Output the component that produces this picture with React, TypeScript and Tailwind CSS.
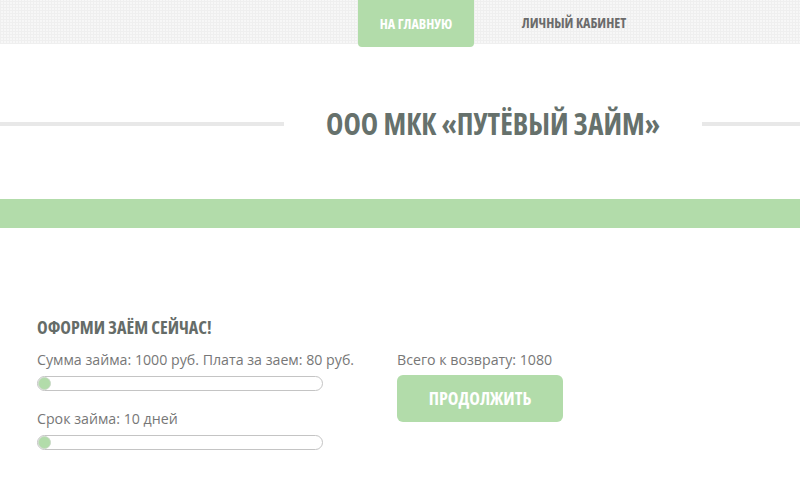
import React from "react";

const cond = "font-['Open_Sans',sans-serif] font-bold font-stretch-condensed";

function Slider() {
  return (
    <div className="relative w-[286px] h-[15px] rounded-full border border-[#c4c4c4] bg-white">
      <div className="absolute left-[0px] top-[0px] w-[13px] h-[13px] rounded-full bg-[#b2dcaa] border border-[#c9d9c6]" />
    </div>
  );
}

export default function App() {
  return (
    <div className="w-[800px] h-[493px] bg-white overflow-hidden font-['Open_Sans',sans-serif]">
      <div
        className="h-[44px] flex justify-start pl-[358px]"
        style={{
          backgroundColor: "#f7f7f7",
          backgroundImage:
            "repeating-linear-gradient(0deg, #efefef 0 1px, transparent 1px 3px), repeating-linear-gradient(90deg, #efefef 0 1px, transparent 1px 3px)",
        }}
      >
        <div className={`w-[116px] h-[47px] bg-[#b2dcaa] rounded-b-[4px] flex items-center justify-center text-white text-[14px] ${cond}`}>
          НА ГЛАВНУЮ
        </div>
        <div className={`w-[200px] h-[44px] flex items-center justify-center text-[#6b6b6b] text-[14px] ${cond}`}>
          ЛИЧНЫЙ КАБИНЕТ
        </div>
      </div>
      <div className="h-[155px] flex items-start pt-[59px]">
        <div className="flex items-center w-full">
          <div className="w-[284px] h-[4px] bg-[#e8e8e8]" />
          <div className={`flex-1 text-center text-[29.4px] leading-[42px] text-[#66716c] ${cond}`}>
            ООО МКК «ПУТЁВЫЙ ЗАЙМ»
          </div>
          <div className="w-[98px] h-[4px] bg-[#e8e8e8]" />
        </div>
      </div>
      <div className="h-[29px] bg-[#b2dcaa]" />
      <div className="pl-[37px] pt-[86px] flex">
        <div className="flex flex-col w-[360px]">
          <div className={`text-[18px] leading-[26px] text-[#656c68] ${cond}`}>ОФОРМИ ЗАЁМ СЕЙЧАС!</div>
          <div className="mt-[10px] text-[14.2px] leading-[20px] text-[#777]">Сумма займа: 1000 руб. Плата за заем: 80 руб.</div>
          <div className="mt-[6px]"><Slider /></div>
          <div className="mt-[18px] text-[14.2px] leading-[20px] text-[#777]">Срок займа: 10 дней</div>
          <div className="mt-[6px]"><Slider /></div>
        </div>
        <div className="flex flex-col pt-[36px]">
          <div className="text-[14.2px] leading-[20px] text-[#777]">Всего к возврату: 1080</div>
          <div className={`mt-[5px] w-[166px] h-[47px] rounded-[6px] bg-[#b2dcaa] flex items-center justify-center text-white text-[18px] ${cond}`}>
            ПРОДОЛЖИТЬ
          </div>
        </div>
      </div>
    </div>
  );
}
